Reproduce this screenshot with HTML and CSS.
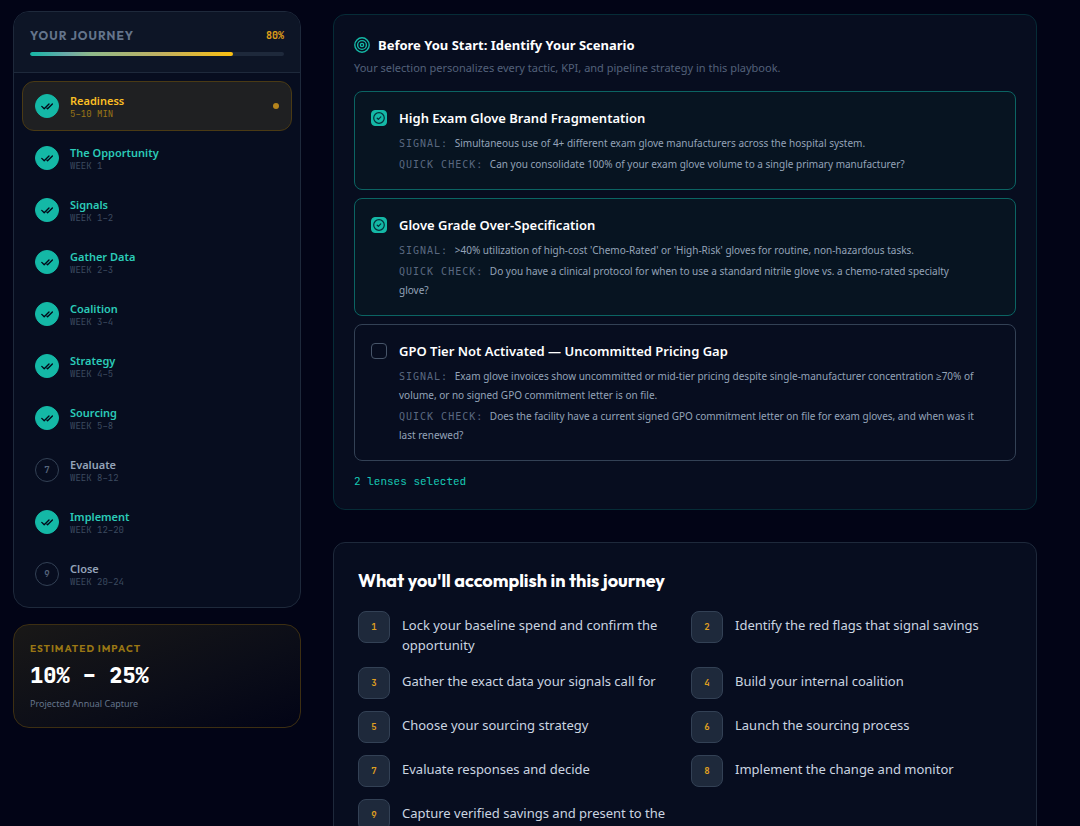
FILE: index.html
```html
<!DOCTYPE html>
<html lang="en">
<head>
  <meta charset="UTF-8">
  <meta name="viewport" content="width=device-width, initial-scale=1.0">
  <title>Exam Glove Playbook</title>
  <link rel="stylesheet" href="styles.css">
</head>
<body>
  <svg class="sprite" aria-hidden="true">
    <symbol id="icon-checks" viewBox="0 0 12 12">
      <path d="M0.8 6.4 3.2 8.8 8 4M6 8.2 6.6 8.8 11.4 4" />
    </symbol>
    <symbol id="icon-target" viewBox="0 0 16 16">
      <circle cx="8" cy="8" r="7.2" />
      <circle cx="8" cy="8" r="4.4" />
      <circle cx="8" cy="8" r="1.6" />
    </symbol>
    <symbol id="icon-circle-check" viewBox="0 0 16 16">
      <circle cx="8" cy="8" r="5.3" />
      <path d="M6.2 8.2 7.4 9.3 9.8 6.9" />
    </symbol>
  </svg>

  <div class="layout">
    <aside class="sidebar">
      <nav class="journey" aria-label="Your journey">
        <div class="journey-header">
          <div class="journey-heading">
            <h2 class="journey-title">Your Journey</h2>
            <span class="journey-percent">80%</span>
          </div>
          <div class="progress">
            <div class="progress-bar" style="width: 80%"></div>
          </div>
        </div>
        <div class="steps">
          <button type="button" class="step done active" aria-current="step">
            <span class="step-mark"><svg><use href="#icon-checks" /></svg></span>
            <span class="step-text">
              <span class="step-name">Readiness</span>
              <span class="step-time">5–10 MIN</span>
            </span>
            <span class="step-dot"></span>
          </button>
          <button type="button" class="step done">
            <span class="step-mark"><svg><use href="#icon-checks" /></svg></span>
            <span class="step-text">
              <span class="step-name">The Opportunity</span>
              <span class="step-time">WEEK 1</span>
            </span>
          </button>
          <button type="button" class="step done">
            <span class="step-mark"><svg><use href="#icon-checks" /></svg></span>
            <span class="step-text">
              <span class="step-name">Signals</span>
              <span class="step-time">WEEK 1–2</span>
            </span>
          </button>
          <button type="button" class="step done">
            <span class="step-mark"><svg><use href="#icon-checks" /></svg></span>
            <span class="step-text">
              <span class="step-name">Gather Data</span>
              <span class="step-time">WEEK 2–3</span>
            </span>
          </button>
          <button type="button" class="step done">
            <span class="step-mark"><svg><use href="#icon-checks" /></svg></span>
            <span class="step-text">
              <span class="step-name">Coalition</span>
              <span class="step-time">WEEK 3–4</span>
            </span>
          </button>
          <button type="button" class="step done">
            <span class="step-mark"><svg><use href="#icon-checks" /></svg></span>
            <span class="step-text">
              <span class="step-name">Strategy</span>
              <span class="step-time">WEEK 4–5</span>
            </span>
          </button>
          <button type="button" class="step done">
            <span class="step-mark"><svg><use href="#icon-checks" /></svg></span>
            <span class="step-text">
              <span class="step-name">Sourcing</span>
              <span class="step-time">WEEK 5–8</span>
            </span>
          </button>
          <button type="button" class="step">
            <span class="step-mark">7</span>
            <span class="step-text">
              <span class="step-name">Evaluate</span>
              <span class="step-time">WEEK 8–12</span>
            </span>
          </button>
          <button type="button" class="step done">
            <span class="step-mark"><svg><use href="#icon-checks" /></svg></span>
            <span class="step-text">
              <span class="step-name">Implement</span>
              <span class="step-time">WEEK 12–20</span>
            </span>
          </button>
          <button type="button" class="step">
            <span class="step-mark">9</span>
            <span class="step-text">
              <span class="step-name">Close</span>
              <span class="step-time">WEEK 20–24</span>
            </span>
          </button>
        </div>
      </nav>

      <section class="impact">
        <h2 class="impact-title">Estimated Impact</h2>
        <p class="impact-value">10% – 25%</p>
        <p class="impact-note">Projected Annual Capture</p>
      </section>
    </aside>

    <main class="content">
      <section class="panel scenarios">
        <h2 class="scenarios-title">
          <svg><use href="#icon-target" /></svg>
          Before You Start: Identify Your Scenario
        </h2>
        <p class="scenarios-intro">Your selection personalizes every tactic, KPI, and pipeline strategy in this playbook.</p>

        <div class="scenario-list">
          <label class="scenario">
            <span class="checkbox">
              <input type="checkbox" checked>
              <svg><use href="#icon-circle-check" /></svg>
            </span>
            <span class="scenario-body">
              <span class="scenario-name">High Exam Glove Brand Fragmentation</span>
              <span class="scenario-line"><span class="tag">SIGNAL:</span> Simultaneous use of 4+ different exam glove manufacturers across the hospital system.</span>
              <span class="scenario-line"><span class="tag">QUICK CHECK:</span> Can you consolidate 100% of your exam glove volume to a single primary manufacturer?</span>
            </span>
          </label>
          <label class="scenario">
            <span class="checkbox">
              <input type="checkbox" checked>
              <svg><use href="#icon-circle-check" /></svg>
            </span>
            <span class="scenario-body">
              <span class="scenario-name">Glove Grade Over-Specification</span>
              <span class="scenario-line"><span class="tag">SIGNAL:</span> &gt;40% utilization of high-cost 'Chemo-Rated' or 'High-Risk' gloves for routine, non-hazardous tasks.</span>
              <span class="scenario-line"><span class="tag">QUICK CHECK:</span> Do you have a clinical protocol for when to use a standard nitrile glove vs. a chemo-rated specialty glove?</span>
            </span>
          </label>
          <label class="scenario">
            <span class="checkbox">
              <input type="checkbox">
              <svg><use href="#icon-circle-check" /></svg>
            </span>
            <span class="scenario-body">
              <span class="scenario-name">GPO Tier Not Activated — Uncommitted Pricing Gap</span>
              <span class="scenario-line"><span class="tag">SIGNAL:</span> Exam glove invoices show uncommitted or mid-tier pricing despite single-manufacturer concentration ≥70% of volume, or no signed GPO commitment letter is on file.</span>
              <span class="scenario-line"><span class="tag">QUICK CHECK:</span> Does the facility have a current signed GPO commitment letter on file for exam gloves, and when was it last renewed?</span>
            </span>
          </label>
        </div>
        <p class="scenarios-count">2 lenses selected</p>
      </section>

      <section class="panel goals">
        <h2 class="goals-title">What you'll accomplish in this journey</h2>
        <ol class="goal-list">
          <li class="goal"><span class="goal-number">1</span><span class="goal-text">Lock your baseline spend and confirm the opportunity</span></li>
          <li class="goal"><span class="goal-number">2</span><span class="goal-text">Identify the red flags that signal savings</span></li>
          <li class="goal"><span class="goal-number">3</span><span class="goal-text">Gather the exact data your signals call for</span></li>
          <li class="goal"><span class="goal-number">4</span><span class="goal-text">Build your internal coalition</span></li>
          <li class="goal"><span class="goal-number">5</span><span class="goal-text">Choose your sourcing strategy</span></li>
          <li class="goal"><span class="goal-number">6</span><span class="goal-text">Launch the sourcing process</span></li>
          <li class="goal"><span class="goal-number">7</span><span class="goal-text">Evaluate responses and decide</span></li>
          <li class="goal"><span class="goal-number">8</span><span class="goal-text">Implement the change and monitor</span></li>
          <li class="goal"><span class="goal-number">9</span><span class="goal-text">Capture verified savings and present to the</span></li>
        </ol>
      </section>
    </main>
  </div>
</body>
</html>
```
FILE: styles.css
```css
:root {
  --page-bg: #020416;
  --panel-bg: #070d1f;
  --header-bg: #0d1526;
  --line: #1e293b;
  --line-light: #334155;
  --teal: #14b8a6;
  --amber: #fbbf24;
  --slate: #64748b;
  --slate-light: #94a3b8;
  --sans: "Segoe UI", "Noto Sans", "Open Sans", sans-serif;
  --mono: "JetBrains Mono", "DejaVu Sans Mono", monospace;
  --display: "Outfit", "Lato", sans-serif;
}

* {
  box-sizing: border-box;
}

body {
  margin: 0;
  background-color: var(--page-bg);
  color: #fff;
  font-family: var(--sans);
}

h2,
p,
ol {
  margin: 0;
  padding: 0;
}

svg {
  fill: none;
  stroke: currentColor;
  stroke-linecap: round;
  stroke-linejoin: round;
}

.sprite {
  display: none;
}

.layout {
  display: flex;
  align-items: flex-start;
  gap: 32px;
  padding: 11px 43px 32px 13px;
}

/* Sidebar */

.sidebar {
  flex: 0 0 288px;
  display: flex;
  flex-direction: column;
  gap: 16px;
}

.journey {
  border: 1px solid var(--line);
  border-radius: 16px;
  background-color: var(--panel-bg);
  overflow: hidden;
}

.journey-header {
  padding: 16px;
  border-bottom: 1px solid var(--line);
  background-color: var(--header-bg);
}

.journey-heading {
  display: flex;
  justify-content: space-between;
  align-items: center;
  margin-bottom: 8px;
  line-height: 16px;
}

.journey-title {
  font-family: var(--display);
  font-size: 12px;
  font-weight: 700;
  letter-spacing: 1px;
  text-transform: uppercase;
  color: var(--slate);
}

.journey-percent {
  font-family: var(--mono);
  font-size: 10px;
  font-weight: 700;
  color: #e0a018;
}

.progress {
  height: 4px;
  border-radius: 2px;
  background-color: var(--line);
  overflow: hidden;
}

.progress-bar {
  height: 100%;
  border-radius: 2px;
  background: linear-gradient(90deg, #14b8a6, #6aa9a8 18%, #8fb98a 30%, #c2b060 65%, #fbbf10);
}

.steps {
  display: flex;
  flex-direction: column;
  gap: 2px;
  padding: 8px;
}

.step {
  display: flex;
  align-items: center;
  gap: 11px;
  width: 100%;
  height: 50px;
  padding: 0 12px;
  border: 1px solid transparent;
  border-radius: 12px;
  background: none;
  color: var(--slate-light);
  font-family: var(--sans);
  text-align: left;
  cursor: pointer;
}

.step-mark {
  display: flex;
  flex: none;
  align-items: center;
  justify-content: center;
  width: 24px;
  height: 24px;
  border: 1px solid var(--line-light);
  border-radius: 50%;
  color: #56657c;
  font-family: var(--mono);
  font-size: 9px;
  font-weight: 700;
}

.step-mark svg {
  width: 12px;
  height: 12px;
  stroke-width: 1.3;
}

.step-text {
  display: flex;
  flex: 1;
  flex-direction: column;
}

.step-name {
  font-size: 11px;
  font-weight: 600;
  line-height: 15px;
}

.step-time {
  color: #3d4b60;
  font-family: var(--mono);
  font-size: 9px;
  line-height: 12px;
}

.step.done .step-mark {
  border-color: var(--teal);
  background-color: var(--teal);
  color: #020617;
}

.step.done .step-name {
  color: #2bcbb8;
}

.step.active {
  border-color: #4a3a14;
  background-color: #1f2022;
}

.step.active .step-name {
  color: var(--amber);
}

.step.active .step-time {
  color: #9a7516;
}

.step-dot {
  width: 6px;
  height: 6px;
  border-radius: 50%;
  background-color: #b5841c;
}

.impact {
  padding: 16px;
  border: 1px solid #3d2f12;
  border-radius: 16px;
  background: linear-gradient(160deg, #191817, #0b0d18 60%, #020416);
}

.impact-title {
  margin-bottom: 4px;
  font-family: var(--display);
  font-size: 10px;
  font-weight: 700;
  line-height: 15px;
  letter-spacing: 1px;
  text-transform: uppercase;
  color: #9a7714;
}

.impact-value {
  margin-bottom: 4px;
  font-family: var(--mono);
  font-size: 22px;
  font-weight: 800;
  line-height: 32px;
}

.impact-note {
  color: var(--slate);
  font-size: 9px;
  line-height: 15px;
}

/* Main column */

.content {
  display: flex;
  flex: 1;
  flex-direction: column;
  gap: 32px;
  min-width: 0;
  padding-top: 3px;
}

.panel {
  border: 1px solid var(--line);
  border-radius: 12px;
  background-color: var(--panel-bg);
}

.scenarios {
  padding: 20px;
  border-color: #062c37;
}

.scenarios-title {
  display: flex;
  align-items: center;
  gap: 8px;
  font-size: 13px;
  font-weight: 700;
  line-height: 20px;
}

.scenarios-title svg {
  width: 16px;
  height: 16px;
  color: var(--teal);
  stroke-width: 1.4;
}

.scenarios-intro {
  margin: 3px 0 13px;
  color: #53617a;
  font-size: 11px;
  line-height: 20px;
}

.scenario-list {
  display: flex;
  flex-direction: column;
  gap: 8px;
}

.scenario {
  display: flex;
  gap: 12px;
  padding: 16px 16px 15px;
  border: 1px solid var(--line-light);
  border-radius: 8px;
  cursor: pointer;
}

.scenario:has(input:checked) {
  border-color: #0b6463;
  background-color: #071421;
}

.checkbox {
  display: grid;
  flex: none;
  width: 16px;
  height: 16px;
  margin-top: 2px;
}

.checkbox input,
.checkbox svg {
  grid-area: 1 / 1;
  width: 16px;
  height: 16px;
  margin: 0;
}

.checkbox input {
  appearance: none;
  border: 1px solid #475569;
  border-radius: 4px;
}

.checkbox input:checked {
  border-color: var(--teal);
  background-color: var(--teal);
}

.checkbox svg {
  visibility: hidden;
  color: #04303a;
  stroke-width: 1.2;
  pointer-events: none;
}

.checkbox input:checked + svg {
  visibility: visible;
}

.scenario-body {
  display: flex;
  flex: 1;
  flex-direction: column;
  gap: 2px;
  min-width: 0;
}

.scenario-name {
  margin-bottom: 4px;
  font-size: 13px;
  font-weight: 600;
  line-height: 20px;
}

.scenario-line {
  padding-right: 20px;
  color: var(--slate-light);
  font-size: 10px;
  line-height: 19px;
}

.tag {
  margin-right: 4px;
  color: #5a6880;
  font-family: "DejaVu Sans Mono", monospace;
  font-size: 10px;
  line-height: 12px;
  letter-spacing: 1px;
}

.scenarios-count {
  margin-top: 12px;
  color: #17c9b5;
  font-family: var(--mono);
  font-size: 11px;
  line-height: 16px;
}

.goals {
  padding: 24px;
}

.goals-title {
  margin-bottom: 16px;
  font-family: var(--display);
  font-size: 18px;
  font-weight: 700;
  line-height: 28px;
}

.goal-list {
  display: grid;
  grid-template-columns: 1fr 1fr;
  gap: 12px;
  list-style: none;
}

.goal {
  display: flex;
  align-items: flex-start;
  gap: 12px;
}

.goal-number {
  display: flex;
  flex: none;
  align-items: center;
  justify-content: center;
  width: 32px;
  height: 32px;
  border: 1px solid var(--line-light);
  border-radius: 8px;
  background-color: var(--line);
  color: #e0a020;
  font-family: var(--mono);
  font-size: 9px;
  font-weight: 700;
}

.goal-text {
  padding-top: 4px;
  color: #cbd5e1;
  font-size: 13px;
  line-height: 20px;
}
```
